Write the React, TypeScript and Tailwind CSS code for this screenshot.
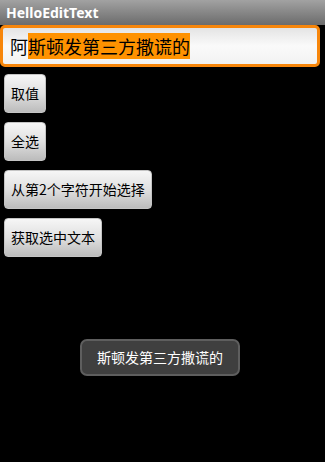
import React from "react";

const cjk = { fontFamily: '"Noto Sans CJK SC", "Noto Sans", sans-serif' };

function Btn({ label, mt }: { label: string; mt: string }) {
  return (
    <div
      className={`${mt} ml-[4px] h-[39px] self-start flex items-center px-[6px] rounded-[4px] whitespace-nowrap text-[14px] text-black bg-gradient-to-b from-[#f6f6f6] via-[#e0e0e0] to-[#bcbcbc] border border-[#c4c4c4]`}
      style={cjk}
    >
      {label}
    </div>
  );
}

export default function App() {
  return (
    <div className="relative w-[325px] h-[462px] bg-black overflow-hidden" style={cjk}>
      <div
        className="h-[25px] flex items-center pl-[6px] bg-gradient-to-b from-[#a2a2a2] to-[#6c6c6c] text-white font-bold text-[14px]"
        style={{ fontFamily: '"Noto Sans", "Open Sans", sans-serif' }}
      >
        HelloEditText
      </div>
      <div className="ml-0 w-[320px] h-[42px] rounded-[5px] border-[3px] border-[#f7860b] bg-gradient-to-b from-[#e4e4e4] via-[#fafafa] to-[#f2f2f2] flex items-center pl-[7px]">
        <span className="text-[18px] leading-[24px] text-black whitespace-nowrap">
          阿<span className="bg-[#ff9200]">斯顿发第三方撒谎的</span>
        </span>
      </div>
      <div className="flex flex-col">
        <Btn label="取值" mt="mt-[7px]" />
        <Btn label="全选" mt="mt-[9px]" />
        <Btn label="从第2个字符开始选择" mt="mt-[9px]" />
        <Btn label="获取选中文本" mt="mt-[9px]" />
      </div>
      <div className="absolute left-[80px] top-[339px] w-[160px] h-[37px] rounded-[7px] border-2 border-[#5e5e5e] bg-[#3f3f3f] flex items-center justify-center text-[14px] text-white whitespace-nowrap">
        斯顿发第三方撒谎的
      </div>
    </div>
  );
}
